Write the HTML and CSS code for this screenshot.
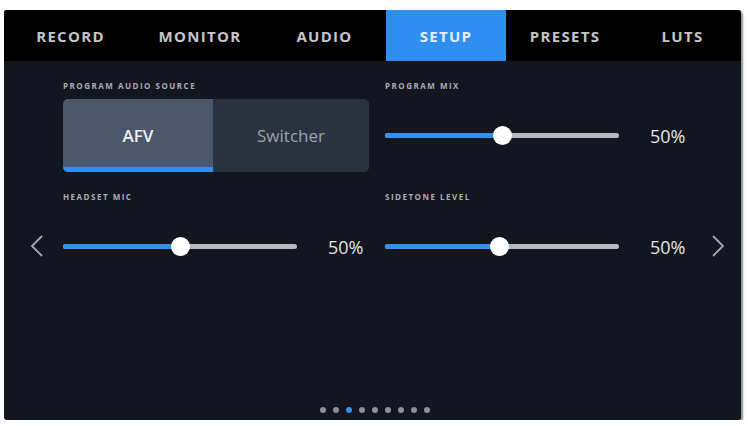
FILE: index.html
```html
<!DOCTYPE html>
<html>
<head>
<meta charset="utf-8">
<link rel="stylesheet" href="styles.css">
</head>
<body>
<div class="screen">
  <div class="tabs">
    <div class="tab">RECORD</div>
    <div class="tab">MONITOR</div>
    <div class="tab">AUDIO</div>
    <div class="tab active">SETUP</div>
    <div class="tab">PRESETS</div>
    <div class="tab">LUTS</div>
  </div>
  <div class="content">
    <svg class="chev chev-left" width="14" height="26" viewBox="0 0 14 26"><path d="M12 3 L2 13 L12 23" fill="none" stroke="#a3a7ae" stroke-width="1.8"/></svg>
    <svg class="chev chev-right" width="14" height="26" viewBox="0 0 14 26"><path d="M2 3 L12 13 L2 23" fill="none" stroke="#a3a7ae" stroke-width="1.8"/></svg>
    <div class="grid">
      <div class="cell">
        <div class="label">PROGRAM AUDIO SOURCE</div>
        <div class="segmented">
          <div class="seg on">AFV</div>
          <div class="seg">Switcher</div>
        </div>
      </div>
      <div class="cell">
        <div class="label">PROGRAM MIX</div>
        <div class="slider-row">
          <div class="track"><div class="fill" style="width:50%"></div><div class="knob" style="left:50%"></div></div>
          <div class="value">50%</div>
        </div>
      </div>
      <div class="cell">
        <div class="label">HEADSET MIC</div>
        <div class="slider-row">
          <div class="track"><div class="fill" style="width:50%"></div><div class="knob" style="left:50%"></div></div>
          <div class="value">50%</div>
        </div>
      </div>
      <div class="cell">
        <div class="label">SIDETONE LEVEL</div>
        <div class="slider-row">
          <div class="track"><div class="fill" style="width:49%"></div><div class="knob" style="left:49%"></div></div>
          <div class="value">50%</div>
        </div>
      </div>
    </div>
    <div class="dots">
      <span class="dot"></span><span class="dot"></span><span class="dot active"></span><span class="dot"></span><span class="dot"></span><span class="dot"></span><span class="dot"></span><span class="dot"></span><span class="dot"></span>
    </div>
  </div>
</div>
</body>
</html>
```

FILE: styles.css
```css
html, body {
  margin: 0;
  padding: 0;
  background: #ffffff;
}
body {
  font-family: "Open Sans", "Noto Sans", sans-serif;
  padding: 10px 0 0 4px;
}
.screen {
  width: 737px;
  height: 410px;
  background: #13161f;
  border-radius: 3px;
  overflow: hidden;
  box-shadow: 2px 2px 2px rgba(0, 0, 0, 0.45);
  display: flex;
  flex-direction: column;
}
.tabs {
  display: grid;
  grid-template-columns: 133px 126px 123px 120px 118px 117px;
  height: 51px;
  background: #000000;
  flex: none;
}
.tab {
  display: flex;
  align-items: center;
  justify-content: center;
  font-size: 15px;
  font-weight: 700;
  letter-spacing: 1.3px;
  color: #c4c5c8;
}
.tab.active {
  background: #2f8ff0;
  color: #e2f0ff;
}
.content {
  position: relative;
  flex: 1;
  display: flex;
  flex-direction: column;
  padding: 20px 0 0 59px;
}
.grid {
  display: grid;
  grid-template-columns: 306px 320px;
  column-gap: 16px;
  row-gap: 20px;
}
.label {
  font-size: 8px;
  font-weight: 700;
  letter-spacing: 1.5px;
  color: #a9adb5;
  height: 10px;
  line-height: 10px;
  margin-bottom: 8px;
}
.segmented {
  display: flex;
  height: 73px;
  border-radius: 5px;
  overflow: hidden;
}
.seg {
  flex: 0 0 150px;
  display: flex;
  align-items: center;
  justify-content: center;
  font-size: 17px;
  color: #9aa2ae;
  background: #2b323f;
}
.seg + .seg {
  flex: 1;
}
.seg.on {
  background: #4b586b;
  color: #eef0f4;
  font-weight: 600;
  border-bottom: 5px solid #2f8ff0;
  padding-top: 5px;
  box-sizing: border-box;
}
.slider-row {
  display: flex;
  align-items: center;
  height: 73px;
}
.track {
  position: relative;
  width: 234px;
  height: 5px;
  border-radius: 3px;
  background: #b6b9c0;
}
.fill {
  height: 100%;
  border-radius: 3px;
  background: #3590ea;
}
.knob {
  position: absolute;
  top: 50%;
  width: 19px;
  height: 19px;
  margin: -9.5px 0 0 -9.5px;
  border-radius: 50%;
  background: #ffffff;
}
.value {
  margin-left: 31px;
  font-size: 18px;
  color: #e4e5e8;
}
.chev {
  position: absolute;
  top: 172px;
}
.chev-left {
  left: 26px;
}
.chev-right {
  left: 707px;
}
.dots {
  margin-top: auto;
  margin-bottom: 7px;
  display: flex;
  justify-content: center;
  gap: 7px;
  padding-right: 55px;
}
.dot {
  width: 6px;
  height: 6px;
  border-radius: 50%;
  background: #8b9099;
}
.dot.active {
  background: #3a8fe8;
}
```
